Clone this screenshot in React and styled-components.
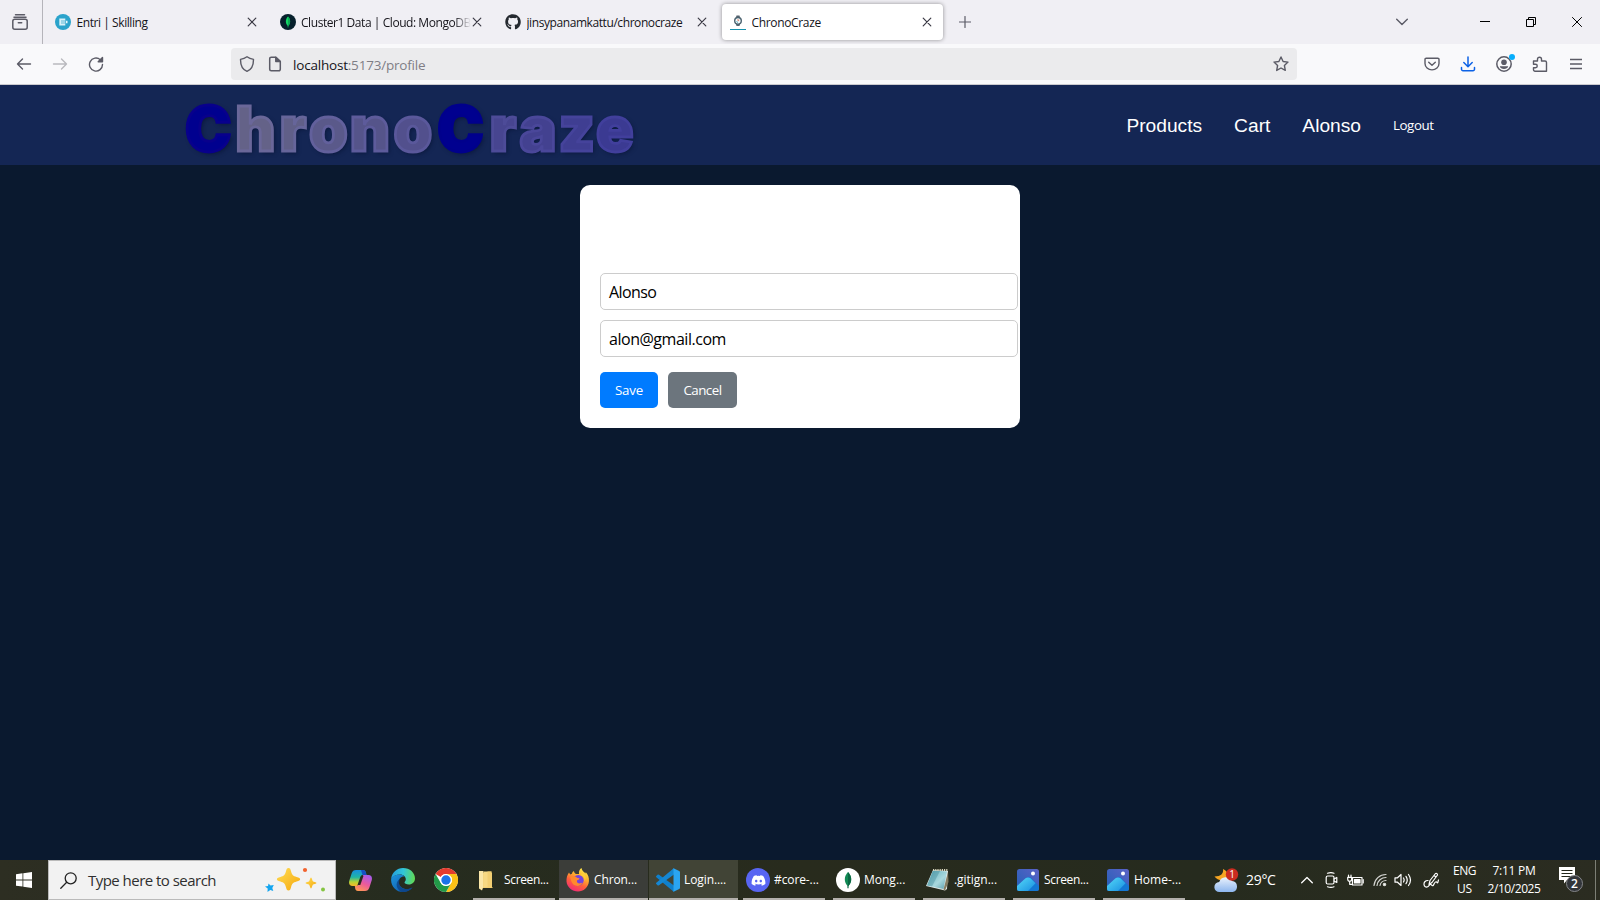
import React from 'react';
import styled, { createGlobalStyle, css } from 'styled-components';
import { FaGithub, FaDiscord } from 'react-icons/fa';

const ui = '"Open Sans", "Noto Sans", sans-serif';

const GlobalStyle = createGlobalStyle`
  * { box-sizing: border-box; }
  body { margin: 0; overflow: hidden; font-family: ${ui}; }
  svg { flex: none; display: block; }
`;

const Screen = styled.div`
  display: flex;
  flex-direction: column;
  width: 1600px;
  height: 900px;
  background: #0a192f;
`;

const Label = styled.span`
  font-family: ${ui};
  font-size: ${(p) => p.$size || 12}px;
  font-weight: ${(p) => p.$weight || 400};
  letter-spacing: ${(p) => p.$ls || 0}px;
  color: ${(p) => p.$color || '#15141a'};
  line-height: 1.2;
  white-space: pre;
`;

/* ---------- browser chrome ---------- */

const TabStrip = styled.div`
  display: flex;
  align-items: center;
  height: 44px;
  background: #f0eff4;
`;

const TabOverview = styled.div`
  display: flex;
  align-items: center;
  width: 43px;
  height: 44px;
  padding-left: 12px;
  border-right: 1px solid #b5b4ba;
`;

const Tab = styled.div`
  display: flex;
  align-items: center;
  width: 225px;
  height: 36px;
  padding: 0 11px 0 12px;
  border-radius: 4px;
  ${(p) =>
    p.$active &&
    css`
      width: 221px;
      height: 36px;
      margin-left: 4px;
      padding: 0 11px 0 8px;
      background: #fff;
      box-shadow: 0 0 4px rgba(0, 0, 0, 0.4);
    `}
`;

const TabTitle = styled.div`
  flex: 1;
  min-width: 0;
  height: 20px;
  margin-left: ${(p) => p.$gap || 5.5}px;
  padding-top: 2px;
  display: flex;
  align-items: center;
  overflow: hidden;
  ${(p) =>
    p.$fade &&
    css`
      mask-image: linear-gradient(to right, #000 calc(100% - 18px), transparent calc(100% - 1px));
    `}
`;

const NewTab = styled.div`
  display: flex;
  margin-left: 16px;
`;

const WindowButtons = styled.div`
  display: flex;
  align-items: center;
  gap: 36px;
  margin-left: auto;
  padding-right: 18px;
`;

const TabListButton = styled.div`
  margin-right: 36px;
`;

const Toolbar = styled.div`
  display: flex;
  align-items: center;
  height: 41px;
  padding: 0 16px 1px 15px;
  background: #f9f9fb;
  border-bottom: 1px solid #cbcacf;
`;

const NavButtons = styled.div`
  display: flex;
  align-items: center;
  gap: 18px;
  width: 216px;
`;

const UrlBar = styled.div`
  display: flex;
  align-items: center;
  width: 1066px;
  height: 32px;
  padding: 0 8px;
  border-radius: 4px;
  background: #ebebed;
`;

const UrlText = styled.div`
  flex: 1;
  display: flex;
  margin-left: 10px;
  padding-top: 3px;
`;

const PageIcon = styled.div`
  margin-left: 12px;
`;

const ToolbarIcons = styled.div`
  display: flex;
  align-items: center;
  gap: 20px;
  margin-left: auto;
`;

/* ---------- page ---------- */

const Header = styled.header`
  display: flex;
  align-items: center;
  justify-content: space-between;
  height: 80px;
  padding: 0 166px 0 183px;
  background: #142654;
`;

const Logo = styled.div`
  display: flex;
  padding-top: 8px;
  font: 900 62px/72px Inter, "Liberation Sans", sans-serif;
`;

const Letter = styled.span`
  width: ${(p) => p.$width}px;
  display: flex;
  justify-content: center;
  color: ${(p) => p.$color};
  -webkit-text-stroke: 2.8px ${(p) => p.$edge};
  text-shadow: 2px 2px 4px rgba(5, 15, 45, 0.6);
`;

const Nav = styled.nav`
  display: flex;
  align-items: center;
  gap: 32px;
  padding-right: 0.5px;
`;

const NavLink = styled.a`
  padding-top: 1px;
  font: 19.2px/24px "Liberation Sans", Arial, sans-serif;
  color: #fff;
`;

const Card = styled.main`
  display: flex;
  flex-direction: column;
  align-self: center;
  width: 440px;
  height: 243px;
  margin-top: 20px;
  padding: 88px 2px 20px 20px;
  border-radius: 10px;
  background: #fff;
`;

const Field = styled.div`
  display: flex;
  align-items: center;
  width: 418px;
  height: 37px;
  margin-bottom: 10px;
  padding: 2px 8px 0;
  border: 1px solid #ccc;
  border-radius: 5px;
`;

const Actions = styled.div`
  display: flex;
  gap: 10px;
  margin-top: 5px;
`;

const Button = styled.button`
  width: ${(p) => p.$width}px;
  height: 36px;
  padding: 0 0 1px;
  border: 0;
  border-radius: 5px;
  background: ${(p) => p.$bg};
`;

/* ---------- taskbar ---------- */

const Taskbar = styled.footer`
  display: flex;
  height: 40px;
  margin-top: auto;
  background: linear-gradient(to right, #2d2e22, #262c1f 25%, #282b1d 50%, #262b1e 75%, #2b2c21);
`;

const TaskSlot = styled.div`
  display: flex;
  align-items: center;
  justify-content: center;
  width: ${(p) => p.$width}px;
  height: 40px;
`;

const SearchBox = styled.div`
  display: flex;
  align-items: center;
  width: 288px;
  height: 40px;
  padding: 0 9px 0 11px;
  margin-right: 2px;
  border: 1px solid #bababa;
  background: #f2f2f2;
`;

const SearchText = styled.div`
  flex: 1;
  margin-left: 11px;
`;

const Tasks = styled.div`
  display: flex;
  margin-left: 1px;
`;

const Task = styled.div`
  display: flex;
  align-items: center;
  width: ${(p) => (p.$active ? 89 : 82)}px;
  height: 40px;
  margin: ${(p) => (p.$active ? '0 1px 0 0' : '0 4px')};
  padding-left: ${(p) => (p.$active ? 7 : 3)}px;
  padding-top: 2px;
  gap: 4px;
  background: ${(p) => p.$bg || 'transparent'};
  border-bottom: 2px solid #b3b0ac;
`;

const Weather = styled.div`
  display: flex;
  align-items: center;
  gap: 7px;
  width: 106px;
  padding-left: 24px;
`;

const TrayGap = styled.div`
  width: 4px;
`;

const Stack = styled.div`
  display: flex;
  flex-direction: column;
  align-items: center;
  justify-content: center;
  gap: 3px;
  width: ${(p) => p.$width}px;
`;

const Notifications = styled.div`
  display: flex;
  align-items: center;
  margin-left: 16px;
`;

const DesktopEdge = styled.div`
  width: 1px;
  height: 40px;
  margin-left: auto;
  margin-right: 4px;
  background: #7d7f75;
`;

const DiscordBadge = styled.div`
  display: flex;
  align-items: center;
  justify-content: center;
  width: 24px;
  height: 24px;
  border-radius: 50%;
  background: #5865f2;
`;

/* ---------- icons ---------- */

const Line = ({ w = 16, h = 16, color = '#5b5b66', sw = 1.4, cap = 'round', children }) => (
  <svg width={w} height={h} viewBox={`0 0 ${w} ${h}`} fill="none" stroke={color} strokeWidth={sw} strokeLinecap={cap} strokeLinejoin="round">
    {children}
  </svg>
);

const Close = () => (
  <Line w={10} h={10} color="#3a3944" sw={1.2}><path d="M1.200 1.200l7.600 7.600M8.800 1.200L1.200 8.800" /></Line>
);

const EntriIcon = () => (
  <svg width="16" height="16" viewBox="0 0 16 16">
    <circle cx="8" cy="8" r="8" fill="#2ba3cb" />
    <path d="M4.300 4.500h6v7h-6z" fill="#d9f1f8" />
    <path d="M6 7h4M6 9h4" stroke="#2ba3cb" strokeWidth=".7" />
    <path d="M11 6.800h1.500v2.400H11z" fill="#e9f7fb" />
  </svg>
);

const MongoIcon = ({ size, bg, leaf, dark }) => (
  <svg width={size} height={size} viewBox="0 0 16 16">
    <circle cx="8" cy="8" r="8" fill={bg} />
    <path d="M8 2.600c2.800 2.800 2.900 7 0 9.600C5.100 9.600 5.200 5.400 8 2.600z" fill={leaf} />
    <path d="M8 2.600c2.800 2.800 2.900 7 0 9.600z" fill={dark} />
    <path d="M8 11.500v2" stroke={dark} strokeWidth=".8" />
  </svg>
);

const WatchIcon = () => (
  <svg width="16" height="16" viewBox="0 0 16 16" fill="none">
    <path d="M5.800 4L6.500 1.500h3l.7 2.500M5.800 9.500l.7 2.500h3l.7-2.500" fill="#55636e" />
    <circle cx="8" cy="6.800" r="3.300" fill="#f5fafb" stroke="#4b626f" strokeWidth="1.400" />
    <path d="M8 5v2l1.200-.8" stroke="#d9735f" strokeWidth=".8" />
    <path d="M6.500 7.500L8 8.500" stroke="#45a5b5" strokeWidth="1" />
    <path d="M0 15.500h16" stroke="#1591ad" strokeWidth="1" />
  </svg>
);

const WindowsIcon = () => (
  <svg width="16" height="16" viewBox="0 0 16 16" fill="#fff">
    <path d="M0 2.200L6.500 1.300v6.200H0zM7.300 1.200L16 0v7.500H7.300zM0 8.400h6.500v6.200L0 13.700zM7.300 8.400H16V16l-8.700-1.200z" />
  </svg>
);

const SparklesIcon = () => (
  <svg width="61" height="26" viewBox="0 0 61 26">
    <defs>
      <linearGradient id="gold" x1="0" y1="0" x2="1" y2="1">
        <stop offset="0" stopColor="#ffdd55" /><stop offset="1" stopColor="#f5a80d" />
      </linearGradient>
    </defs>
    <path d="M23.500 1c1.500 0 2 1 2.600 3.500 1 3.500 2 4.500 5.500 5.500 2.500.7 3.500 1.200 3.500 2.300s-1 1.600-3.500 2.300c-3.500 1-4.500 2-5.500 5.500-.6 2.500-1.100 3.500-2.600 3.500s-2-1-2.600-3.500c-1-3.500-2-4.500-5.500-5.500-2.500-.7-3.500-1.200-3.500-2.300s1-1.600 3.500-2.300c3.500-1 4.500-2 5.500-5.500C21.500 2 22 1 23.500 1z" fill="url(#gold)" />
    <path d="M46 10.500c.8 0 1.200 3 1.800 3.700.7.700 3.700 1 3.700 1.800s-3 1.100-3.700 1.800c-.6.700-1 3.700-1.800 3.700s-1.200-3-1.800-3.700c-.7-.7-3.700-1-3.700-1.800s3-1.100 3.700-1.800c.6-.7 1-3.700 1.800-3.700z" fill="url(#gold)" />
    <path d="M3.500 16.500l2 2 3.300-.5-1.500 3 1 3-3-1-2.800 2 .2-3.500L0 19.500l3-.5z" fill="#14a5ef" />
    <circle cx="40" cy="3" r="2.100" fill="#f2622e" />
    <circle cx="58" cy="22.500" r="2" fill="#84c441" />
  </svg>
);

const CopilotIcon = () => (
  <svg width="23" height="21" viewBox="0 0 23 21">
    <defs>
      <linearGradient id="cpa" x1="0" y1="0" x2="0" y2="1">
        <stop offset="0" stopColor="#168fdf" /><stop offset=".45" stopColor="#20b5a5" /><stop offset=".75" stopColor="#b6d335" /><stop offset="1" stopColor="#f7b52b" />
      </linearGradient>
      <linearGradient id="cpb" x1=".7" y1="0" x2=".2" y2="1">
        <stop offset="0" stopColor="#a95bea" /><stop offset=".5" stopColor="#ec5a9a" /><stop offset="1" stopColor="#ff9a52" />
      </linearGradient>
    </defs>
    <path d="M7 0h7c1.500 0 2.300.7 2.700 2l.8 3h-3.200c-1.600 0-2.300.9-2.800 2.600L9.700 14c-.5 1.500-1.200 2-2.700 2H3.500C.8 16-.4 14 .2 11L2.600 3.500C3.400 1 4.800 0 7 0z" fill="url(#cpa)" />
    <path d="M12 0h2c1.500 0 2.300.7 2.700 2l.8 3h-4z" fill="#174fc2" />
    <path d="M16 21H9c-1.500 0-2.300-.7-2.700-2l-.5-3H7c1.500 0 2.200-.5 2.700-2L12 7.600C12.500 6 13.200 5 14.500 5h5c2.700 0 3.900 2 3.300 5l-2.400 7.500C19.600 20 18.200 21 16 21z" fill="url(#cpb)" />
    <path d="M14.300 6.500L11.300 15H8.500l2.800-8c.5-1.300 1.300-2 2.700-2z" fill="#262c1f" />
  </svg>
);

const EdgeIcon = () => (
  <svg width="24" height="24" viewBox="0 0 24 24">
    <defs>
      <linearGradient id="eda" x1="0" y1=".3" x2="1" y2=".4">
        <stop offset="0" stopColor="#249ddd" /><stop offset=".5" stopColor="#31c5d8" /><stop offset="1" stopColor="#60d957" />
      </linearGradient>
      <linearGradient id="edb" x1="0" y1="0" x2="1" y2="1">
        <stop offset="0" stopColor="#1d95de" /><stop offset="1" stopColor="#0d4fa0" />
      </linearGradient>
    </defs>
    <path d="M.2 10.500C1 4.500 6 0 12 0c7 0 12 4.800 12 10.400 0 3.600-2.800 6-6.200 6-2.600 0-4.300-.9-4.300-1.900 0-.8 1.300-1.300 1.300-3.300 0-2.500-2.400-4.700-5.600-4.700C5 6.500 1.800 8.300.2 10.500z" fill="url(#eda)" />
    <path d="M.2 10.500C2 7.500 5.300 6.500 8.500 6.500c2.400 0 4.200.8 5.200 2C9.500 8.200 7.500 11.300 7.700 14.500c.3 4 4 6.500 8 6.500 2.300 0 4.400-.8 5.900-1.800C19.500 22.200 16 24 12 24 5 24-.6 18 .2 10.500z" fill="url(#edb)" />
    <path d="M9.500 10.500c-3.600 5.500.5 11.500 7.500 10.500 1.900-.3 3.500-1 4.600-1.800-2.600 4-7.500 5.300-11.600 4.500-5.500-3-6-10-.5-13.200z" fill="#0c3f82" opacity=".75" />
  </svg>
);

const ChromeIcon = () => (
  <svg width="24" height="24" viewBox="0 0 24 24">
    <circle cx="12" cy="12" r="12" fill="#fff" />
    <path d="M1.600 6A12 12 0 0 1 22.400 6H12a6 6 0 0 0-5.200 3z" fill="#e33b2e" />
    <path d="M22.400 6A12 12 0 0 1 12 24l5.200-9A6 6 0 0 0 17.200 9L12 6z" fill="#fbc116" />
    <path d="M1.600 6A12 12 0 0 0 12 24l5.200-9a6 6 0 0 1-10.400 0z" fill="#229a48" />
    <circle cx="12" cy="12" r="6" fill="#fff" />
    <circle cx="12" cy="12" r="4.700" fill="#1a73e8" />
  </svg>
);

const FolderIcon = () => (
  <svg width="24" height="24" viewBox="3 0 24 24">
    <path d="M6 3h4v2h9v14l1 1H10z" fill="#edc666" />
    <path d="M6 3h4.300v16L9 22.500l-3-2z" fill="#fbe7a8" />
    <path d="M10.300 3.500h8.200v16h-8.200z" fill="#f7d983" />
    <path d="M14.500 3.500h4v16h-4z" fill="#f2cf72" />
  </svg>
);

const FirefoxIcon = () => (
  <svg width="24" height="24" viewBox="0 0 24 24">
    <defs>
      <linearGradient id="ffx" x1=".8" y1="0" x2=".3" y2="1">
        <stop offset="0" stopColor="#fff04f" /><stop offset=".35" stopColor="#ffb42c" /><stop offset=".65" stopColor="#ff5f3b" /><stop offset="1" stopColor="#f0297a" />
      </linearGradient>
    </defs>
    <path d="M3 4.500c.5 1 1 1.500 1.500 2 .6-.5 1-.7 1.500-.8C6.200 4.500 7 3.500 8 3c0 1.500.8 2.400 2 3h3c-.4-2.500.6-5 2.500-6 .3 2.500 2.500 4 4 5.500.2-.5.200-1 .1-1.500 2.500 2.700 3.700 5.800 3.300 9.500C22.300 19.500 17.500 23.500 12 23.500S1 19.500.5 13.500C.3 9.800 1.200 7 3 4.500z" fill="url(#ffx)" />
    <circle cx="12.300" cy="12.300" r="5.400" fill="#7344dd" />
    <path d="M4.500 8.500c2.500-1 5-.5 6.500 1.300 1 .3 2 .3 2.500.6-.3 1-1.500 1.500-2.500 2-.5 1.800.8 3 2.700 3 1 0 1.800-.5 2.600-.6-.8 2.200-3.500 3.500-6 3C6.500 17 4.500 13 4.500 8.500z" fill="#ff8a2d" />
    <path d="M14.500 7c2.800.5 4.500 3 4 6 2-2 1.500-6-1.500-8z" fill="#ffcf36" />
  </svg>
);

const VsCodeIcon = () => (
  <svg width="24" height="24" viewBox="0 0 24 24">
    <path d="M1.500 6.800L.3 8a.8.8 0 0 0 0 1.200L18 24V17.500L3 6.700a1.100 1.100 0 0 0-1.500.1z" fill="#0f80cc" />
    <path d="M1.500 17.200L.3 16a.8.8 0 0 1 0-1.200L18 0v6.500L3 17.300a1.100 1.100 0 0 1-1.500-.1z" fill="#1587d2" />
    <path d="M17.500.2L23.200 3c.5.200.8.7.8 1.200v15.600c0 .5-.3 1-.8 1.200l-5.700 2.800z" fill="#2aa5f2" />
  </svg>
);

const NotepadIcon = () => (
  <svg width="24" height="24" viewBox="0 0 24 24">
    <defs>
      <linearGradient id="npd" x1="0" y1="0" x2="1" y2="1">
        <stop offset="0" stopColor="#5babb9" /><stop offset=".6" stopColor="#a9d9de" /><stop offset="1" stopColor="#5c9dab" />
      </linearGradient>
    </defs>
    <path d="M7 2l15 1-1 18-2 1.500L0 18z" fill="#dfe8e7" />
    <path d="M7 2.500l14 1L17.500 21 1 17.500z" fill="url(#npd)" />
    <path d="M7 2.500L1 17.500l5 1L14 3z" fill="#347d8e" opacity=".35" />
    <path d="M7 2h15" stroke="#d8d5bc" strokeWidth="1.800" strokeDasharray="1.200 1" />
    <path d="M22 4l.5 10-3.500 8.500-1.500-1z" fill="#857d62" />
  </svg>
);

const PhotosIcon = () => (
  <svg width="24" height="24" viewBox="0 0 24 24">
    <defs>
      <linearGradient id="phb" x1="0" y1="1" x2="1" y2="0">
        <stop offset="0" stopColor="#2260b8" /><stop offset="1" stopColor="#5b62c6" />
      </linearGradient>
      <linearGradient id="phm" x1="0" y1="0" x2="1" y2="1">
        <stop offset="0" stopColor="#57dcf8" /><stop offset="1" stopColor="#168be0" />
      </linearGradient>
      <clipPath id="phc"><rect x="1" y="1" width="22" height="22" rx="2.500" /></clipPath>
    </defs>
    <g clipPath="url(#phc)">
      <rect x="1" y="1" width="22" height="22" fill="url(#phb)" />
      <path d="M1 19L11.500 9.500c1-.8 2-.8 3 0L24 19v5H1z" fill="#1478d4" />
      <path d="M0 19L9.500 10.300c1.600-1.400 3.800-1 5 0l5 5L11 24H0z" fill="url(#phm)" />
    </g>
    <circle cx="17" cy="5.500" r="2" fill="#fff" />
  </svg>
);

const WeatherIcon = () => (
  <svg width="26" height="25" viewBox="0 0 26 25">
    <defs>
      <linearGradient id="cld" x1="0" y1="0" x2="0" y2="1">
        <stop offset="0" stopColor="#eaf2fd" /><stop offset="1" stopColor="#8db6ee" />
      </linearGradient>
    </defs>
    <path d="M10 1c.8 4.500-2 7.500-8.500 7.500C4 12 9 13.500 13 11c3-3 2-8-3-10z" fill="#f6a623" />
    <path d="M6.500 24a5 5 0 0 1-.3-10A7 7 0 0 1 19 13a5.600 5.600 0 0 1 .8 11z" fill="url(#cld)" />
    <circle cx="19" cy="6.500" r="6.200" fill="#cb2c20" />
    <text x="19" y="10.100" textAnchor="middle" fontFamily="Open Sans" fontSize="10" fill="#fff">1</text>
  </svg>
);

const NotificationIcon = () => (
  <svg width="25" height="26" viewBox="0 0 25 26">
    <path d="M0 0h16v13H8l-3 3.500V13H0z" fill="#fff" />
    <path d="M2.500 3.500h11M2.500 6.500h11M2.500 9.500h11" stroke="#23271c" strokeWidth="1" />
    <circle cx="15.500" cy="16.500" r="8" fill="#32353a" stroke="#85878a" strokeWidth="1" />
    <text x="15.500" y="20.800" textAnchor="middle" fontFamily="Open Sans" fontWeight="600" fontSize="12" fill="#fff">2</text>
  </svg>
);

const letters = [
  ['C', 50.4, '#00008f', '#08008c'], ['h', 44, '#646288', '#6a6799'], ['r', 31, '#605f88', '#66659a'],
  ['o', 40, '#5a598a', '#62609c'], ['n', 43, '#55548a', '#5d5b9b'], ['o', 43, '#52508d', '#5a589b'],
  ['C', 52, '#00008f', '#00008c'], ['r', 33, '#474590', '#4d4b98'], ['a', 37, '#434190', '#4a479a'],
  ['z', 41, '#3f3e92', '#45439b'], ['e', 35, '#3b3a92', '#413f9c'],
];

const tasks = [
  { icon: <FolderIcon />, text: 'Screen...', ls: -0.34 },
  { icon: <FirefoxIcon />, text: 'Chron...', ls: -0.11, bg: '#3b3d39' },
  { icon: <VsCodeIcon />, text: 'Login....', ls: -0.1, bg: '#414436' },
  { icon: <DiscordBadge><FaDiscord size={15} color="#fff" /></DiscordBadge>, text: '#core-...', ls: -0.1 },
  { icon: <MongoIcon size={24} bg="#fff" leaf="#118a55" dark="#0b6843" />, text: 'Mong...', ls: 0 },
  { icon: <NotepadIcon />, text: '.gitign...', ls: -0.03 },
  { icon: <PhotosIcon />, text: 'Screen...', ls: -0.34 },
  { icon: <PhotosIcon />, text: 'Home-...', ls: 0 },
];

export default function App() {
  return (
    <Screen>
      <GlobalStyle />
      <TabStrip>
        <TabOverview>
          <Line sw={1.500}><path d="M3.500.800h9M2 3.300h12" /><rect x=".8" y="5.300" width="14.400" height="9.900" rx="2" /><path d="M6.300 8.800h3.400" /></Line>
        </TabOverview>
        <Tab>
          <EntriIcon />
          <TabTitle><Label $ls={-0.43}>Entri | Skilling</Label></TabTitle>
          <Close />
        </Tab>
        <Tab>
          <MongoIcon size={16} bg="#06202c" leaf="#13d866" dark="#0cab55" />
          <TabTitle $gap={5} $fade><Label $ls={-0.44}>Cluster1 Data | Cloud: MongoDB</Label></TabTitle>
          <Close />
        </Tab>
        <Tab>
          <FaGithub size={16} color="#24292f" />
          <TabTitle><Label $ls={-0.42}>jinsypanamkattu/chronocraze</Label></TabTitle>
          <Close />
        </Tab>
        <Tab $active>
          <WatchIcon />
          <TabTitle><Label $ls={-0.34}>ChronoCraze</Label></TabTitle>
          <Close />
        </Tab>
        <NewTab><Line w={12} h={12} sw={1.200}><path d="M6 .5v11M.5 6h11" /></Line></NewTab>
        <WindowButtons>
          <TabListButton><Line w={12} h={8}><path d="M.7 1.200L6 6.500l5.300-5.300" /></Line></TabListButton>
          <Line w={10} h={10} color="#000" sw={1} cap="butt"><path d="M0 4.500h10" /></Line>
          <Line w={10} h={10} color="#000" sw={1} cap="butt"><path d="M.5 2.500h7v7h-7zM2.500 2.500v-2h7v7h-2" /></Line>
          <Line w={10} h={10} color="#000" sw={1} cap="butt"><path d="M.2.200l9.600 9.600M9.800.200L.2 9.800" /></Line>
        </WindowButtons>
      </TabStrip>
      <Toolbar>
        <NavButtons>
          <Line w={18}><path d="M15.500 8H2.500M7.500 3l-5 5 5 5" /></Line>
          <Line w={18} color="#b9b9be"><path d="M2.500 8h13M10.500 3l5 5-5 5" /></Line>
          <Line w={18}><path d="M13.300 3.700A6.500 6.500 0 1 0 15.500 8.500" /><path d="M15.500 1.500v4.300h-4.300z" fill="#5b5b66" /></Line>
        </NavButtons>
        <UrlBar>
          <Line><path d="M8 .8c2 1.500 4 2.200 6.500 2.600C14.500 9.500 12.500 13.500 8 15.300 3.500 13.500 1.500 9.500 1.500 3.400 4 3 6 2.300 8 .8z" /></Line>
          <PageIcon><Line sw={1.500}><path d="M8.800 1.200H4.200a1.500 1.500 0 0 0-1.500 1.500v10.600a1.500 1.500 0 0 0 1.500 1.500h7.600a1.500 1.500 0 0 0 1.500-1.500V5.500z" /><path d="M8.800 1.200v4.300h4.500z" fill="#5b5b66" /></Line></PageIcon>
          <UrlText>
            <Label $size={13.500} $ls={-0.2}>localhost</Label>
            <Label $size={13.500} $ls={-0.2} $color="#7f7e86">:5173/profile</Label>
          </UrlText>
          <Line><path d="M8 1l2.100 4.500 4.900.6-3.600 3.400.9 4.900L8 12l-4.300 2.400.9-4.900L1 6.100l4.900-.6z" /></Line>
        </UrlBar>
        <ToolbarIcons>
          <Line><path d="M2.200 2.200h11.600a1.200 1.200 0 0 1 1.200 1.200v4a7 6.500 0 0 1-14 0v-4a1.200 1.200 0 0 1 1.200-1.200z" /><path d="M4.700 6.200L8 9.300l3.300-3.100" /></Line>
          <Line color="#0c62e6" sw={1.500}><path d="M8 1v9.500M3.800 6.500L8 10.700l4.200-4.200M1.500 11.500v1.700a1.500 1.500 0 0 0 1.500 1.500h10a1.500 1.500 0 0 0 1.500-1.500v-1.700" /></Line>
          <svg width="16" height="20" viewBox="0 0 16 20" overflow="visible">
            <circle cx="8" cy="10" r="7.200" fill="none" stroke="#5b5b66" strokeWidth="1.500" />
            <circle cx="8" cy="8.300" r="2.800" fill="#5b5b66" />
            <path d="M3.800 12.200h8.400c-.4 1.800-2 2.800-4.200 2.800s-3.800-1-4.200-2.800z" fill="#5b5b66" />
            <circle cx="16" cy="3" r="3" fill="#07aefc" />
          </svg>
          <Line><path d="M1.500 5h4V3.200a2 2 0 0 1 4 0V5H13a1.500 1.500 0 0 1 1.500 1.500v8.700H3a1.500 1.500 0 0 1-1.500-1.500v-2h2a1.700 1.700 0 0 0 0-3.500h-2z" /></Line>
          <Line cap="butt"><path d="M2 3.500h12M2 8h12M2 12.500h12" /></Line>
        </ToolbarIcons>
      </Toolbar>

      <Header>
        <Logo>
          {letters.map(([char, width, color, edge], i) => (
            <Letter key={i} $width={width} $color={color} $edge={edge}>{char}</Letter>
          ))}
        </Logo>
        <Nav>
          <NavLink>Products</NavLink>
          <NavLink>Cart</NavLink>
          <NavLink>Alonso</NavLink>
          <Label $size={13.330} $ls={-0.45} $weight={500} $color="#fff">Logout</Label>
        </Nav>
      </Header>

      <Card>
        <Field><Label $size={16} $ls={-0.6} $color="#000">Alonso</Label></Field>
        <Field><Label $size={16} $ls={-0.47} $color="#000">alon@gmail.com</Label></Field>
        <Actions>
          <Button $width={58} $bg="#007bff"><Label $size={13.330} $ls={-0.25} $weight={500} $color="#fff">Save</Label></Button>
          <Button $width={69} $bg="#6c757d"><Label $size={13.330} $ls={-0.5} $weight={500} $color="#fff">Cancel</Label></Button>
        </Actions>
      </Card>

      <Taskbar>
        <TaskSlot $width={48}><WindowsIcon /></TaskSlot>
        <SearchBox>
          <Line w={17} h={17} color="#222" sw={1.300}><circle cx="10.700" cy="6.300" r="5.500" /><path d="M6.700 10.300L.8 16.200" /></Line>
          <SearchText><Label $size={15} $ls={-0.53} $color="#2f2f2f">Type here to search</Label></SearchText>
          <SparklesIcon />
        </SearchBox>
        <TaskSlot $width={44}><CopilotIcon /></TaskSlot>
        <TaskSlot $width={42}><EdgeIcon /></TaskSlot>
        <TaskSlot $width={44}><ChromeIcon /></TaskSlot>
        <Tasks>
          {tasks.map((t, i) => (
            <Task key={i} $bg={t.bg} $active={Boolean(t.bg)}>
              {t.icon}
              <Label $ls={t.ls} $color="#fff">{t.text}</Label>
            </Task>
          ))}
        </Tasks>
        <Weather>
          <WeatherIcon />
          <Label $size={14} $ls={-0.3} $color="#fff">29°C</Label>
        </Weather>
        <TaskSlot $width={24}><Line w={12} h={8} color="#fff" sw={1.300}><path d="M.7 6.800L6 1.500l5.300 5.300" /></Line></TaskSlot>
        <TaskSlot $width={24}><Line w={13} h={16} color="#fff" sw={1.200}><rect x="1.200" y="4" width="7.800" height="8" rx="1.500" /><path d="M9 7l2.800-1.500v5L9 9M2.500 1.200Q6 0 9 1.200M2.500 14.800Q6 16 9 14.800" /></Line></TaskSlot>
        <TaskSlot $width={24}>
          <Line w={17} h={13} color="#fff" sw={1.200}><rect x="5.500" y="3.500" width="9.500" height="7.500" /><path d="M16.200 5.500v3.500M1.500 1v2M4 1v2M.7 3.300h4v2a2 2 0 0 1-4 0zM2.700 7.500v2.800h2.500" /><path d="M7.500 5.500h5.500v3.500H7.500z" fill="#fff" /></Line>
        </TaskSlot>
        <TaskSlot $width={25}>
          <Line w={14} h={14} color="#d5d6d2" sw={1.200}><path d="M1 12.500A12 12 0 0 1 13 1.500M4 12.500A9 9 0 0 1 13 4.500M7 12.500A6 6 0 0 1 13 7.500" /><circle cx="11.500" cy="11.500" r="1.200" fill="#fff" /></Line>
        </TaskSlot>
        <TaskSlot $width={22}>
          <Line w={18} h={14} color="#fff" sw={1.200}><path d="M1 4.800h2.500L7 1.500v11L3.500 9.200H1zM9.500 5q1.300 2 0 4M12 3.300q2.500 3.700 0 7.400M14.500 1.500q4 5.500 0 11" /></Line>
        </TaskSlot>
        <TrayGap />
        <TaskSlot $width={26}>
          <Line w={17} h={17} color="#fff" sw={1.200}><path d="M6 12.500l1-4L12.500 1.500q2-.5 2 1.500L9 10.500zM11 3.500l2 1.500M5 8.500C2 8.500.8 10.500 1 12.500s2 3.500 4 2c1.500-1.500 2.500-3 3.500-1.500s2 .5 2.500-1 2-3 3-1.500 1-1.500 1.500-2.500" /></Line>
        </TaskSlot>
        <Stack $width={41}>
          <Label $ls={-0.48} $color="#fff">ENG</Label>
          <Label $ls={-0.16} $color="#fff">US</Label>
        </Stack>
        <Stack $width={58}>
          <Label $ls={-0.27} $color="#fff">7:11 PM</Label>
          <Label $ls={-0.43} $color="#fff">2/10/2025</Label>
        </Stack>
        <Notifications><NotificationIcon /></Notifications>
        <DesktopEdge />
      </Taskbar>
    </Screen>
  );
}
